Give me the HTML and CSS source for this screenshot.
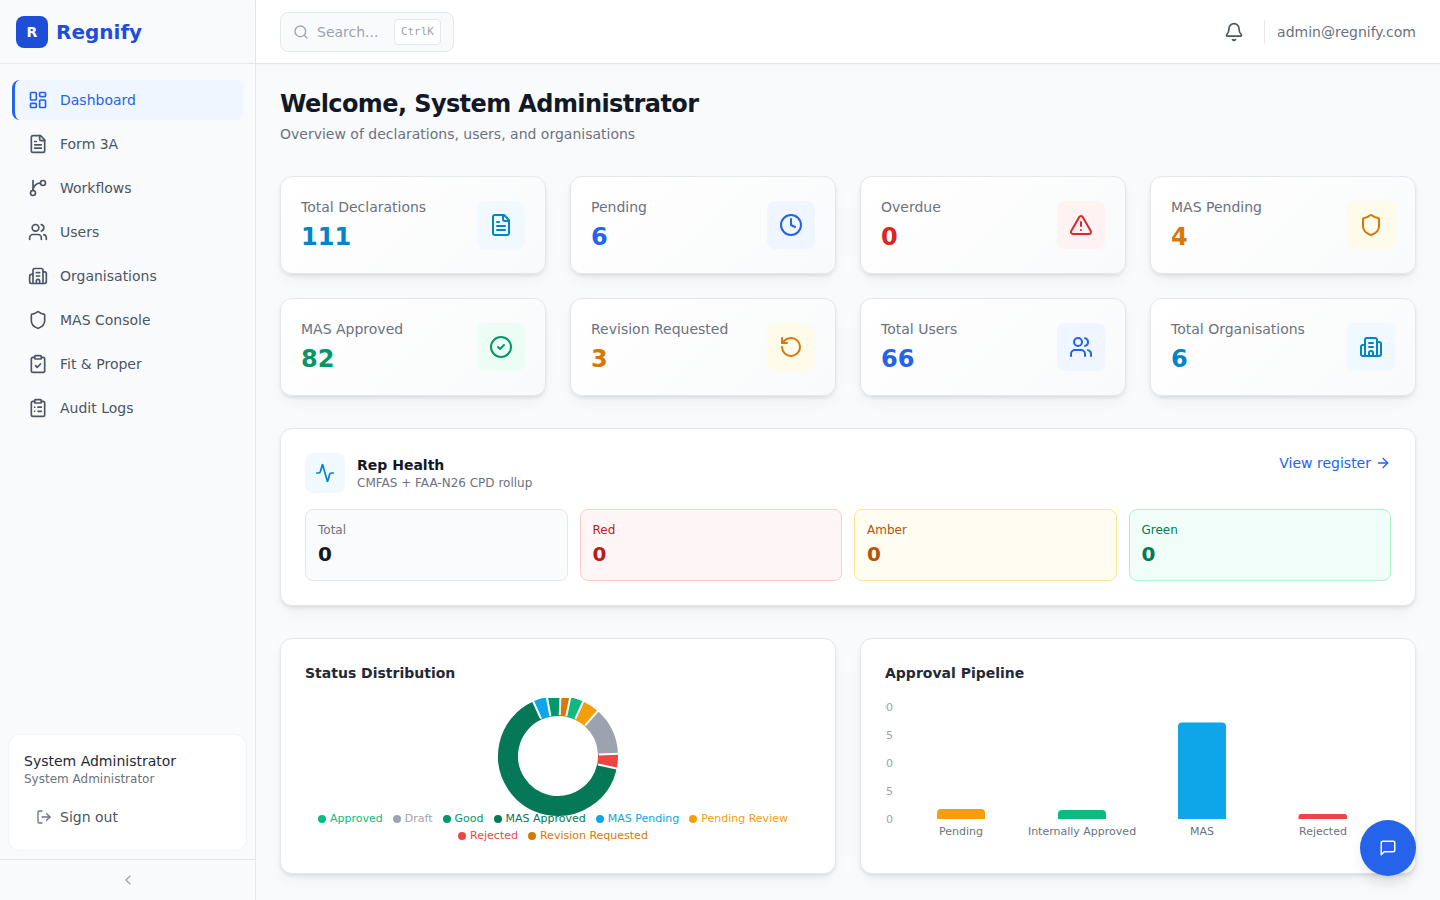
FILE: index.html
```html
<!DOCTYPE html>
<html lang="en">
<head>
	<meta charset="UTF-8">
	<title>Regnify</title>
	<link rel="stylesheet" href="styles.css">
</head>
<body>
	<svg class="sprite" xmlns="http://www.w3.org/2000/svg">
		<symbol id="i-dashboard" viewBox="0 0 24 24"><rect width="7" height="9" x="3" y="3" rx="1"/><rect width="7" height="5" x="14" y="3" rx="1"/><rect width="7" height="9" x="14" y="12" rx="1"/><rect width="7" height="5" x="3" y="16" rx="1"/></symbol>
		<symbol id="i-file" viewBox="0 0 24 24"><path d="M15 2H6a2 2 0 0 0-2 2v16a2 2 0 0 0 2 2h12a2 2 0 0 0 2-2V7Z"/><path d="M14 2v4a2 2 0 0 0 2 2h4"/><path d="M10 9H8"/><path d="M16 13H8"/><path d="M16 17H8"/></symbol>
		<symbol id="i-branch" viewBox="0 0 24 24"><path d="M15 6a9 9 0 0 0-9 9"/><line x1="6" x2="6" y1="3" y2="15"/><circle cx="18" cy="6" r="3"/><circle cx="6" cy="18" r="3"/></symbol>
		<symbol id="i-users" viewBox="0 0 24 24"><path d="M16 21v-2a4 4 0 0 0-4-4H6a4 4 0 0 0-4 4v2"/><circle cx="9" cy="7" r="4"/><path d="M22 21v-2a4 4 0 0 0-3-3.87"/><path d="M16 3.13a4 4 0 0 1 0 7.75"/></symbol>
		<symbol id="i-building" viewBox="0 0 24 24"><path d="M10 12h4"/><path d="M10 8h4"/><path d="M14 21v-3a2 2 0 0 0-4 0v3"/><path d="M6 10H4a2 2 0 0 0-2 2v7a2 2 0 0 0 2 2h16a2 2 0 0 0 2-2V9a2 2 0 0 0-2-2h-2"/><path d="M6 21V5a2 2 0 0 1 2-2h8a2 2 0 0 1 2 2v16"/></symbol>
		<symbol id="i-shield" viewBox="0 0 24 24"><path d="M20 13c0 5-3.5 7.5-7.66 8.95a1 1 0 0 1-.67-.01C7.5 20.5 4 18 4 13V6a1 1 0 0 1 1-1c2 0 4.5-1.2 6.24-2.72a1.17 1.17 0 0 1 1.52 0C14.51 3.81 17 5 19 5a1 1 0 0 1 1 1z"/></symbol>
		<symbol id="i-clipcheck" viewBox="0 0 24 24"><rect width="8" height="4" x="8" y="2" rx="1"/><path d="M16 4h2a2 2 0 0 1 2 2v14a2 2 0 0 1-2 2H6a2 2 0 0 1-2-2V6a2 2 0 0 1 2-2h2"/><path d="m9 14 2 2 4-4"/></symbol>
		<symbol id="i-cliplist" viewBox="0 0 24 24"><rect width="8" height="4" x="8" y="2" rx="1"/><path d="M16 4h2a2 2 0 0 1 2 2v14a2 2 0 0 1-2 2H6a2 2 0 0 1-2-2V6a2 2 0 0 1 2-2h2"/><path d="M12 11h4"/><path d="M12 16h4"/><path d="M8 11h.01"/><path d="M8 16h.01"/></symbol>
		<symbol id="i-logout" viewBox="0 0 24 24"><path d="M9 21H5a2 2 0 0 1-2-2V5a2 2 0 0 1 2-2h4"/><path d="m16 17 5-5-5-5"/><path d="M21 12H9"/></symbol>
		<symbol id="i-chevron" viewBox="0 0 24 24"><path d="m15 18-6-6 6-6"/></symbol>
		<symbol id="i-search" viewBox="0 0 24 24"><path d="m21 21-4.34-4.34"/><circle cx="11" cy="11" r="8"/></symbol>
		<symbol id="i-bell" viewBox="0 0 24 24"><path d="M10.268 21a2 2 0 0 0 3.464 0"/><path d="M3.262 15.326A1 1 0 0 0 4 17h16a1 1 0 0 0 .74-1.673C19.41 13.956 18 12.499 18 8A6 6 0 0 0 6 8c0 4.499-1.411 5.956-2.738 7.326"/></symbol>
		<symbol id="i-clock" viewBox="0 0 24 24"><circle cx="12" cy="12" r="10"/><polyline points="12 6 12 12 16 14"/></symbol>
		<symbol id="i-alert" viewBox="0 0 24 24"><path d="m21.73 18-8-14a2 2 0 0 0-3.48 0l-8 14A2 2 0 0 0 4 21h16a2 2 0 0 0 1.73-3"/><path d="M12 9v4"/><path d="M12 17h.01"/></symbol>
		<symbol id="i-check" viewBox="0 0 24 24"><circle cx="12" cy="12" r="10"/><path d="m9 12 2 2 4-4"/></symbol>
		<symbol id="i-rotate" viewBox="0 0 24 24"><path d="M3 12a9 9 0 1 0 9-9 9.75 9.75 0 0 0-6.74 2.74L3 8"/><path d="M3 3v5h5"/></symbol>
		<symbol id="i-activity" viewBox="0 0 24 24"><path d="M22 12h-2.48a2 2 0 0 0-1.93 1.46l-2.35 8.36a.25.25 0 0 1-.48 0L9.24 2.18a.25.25 0 0 0-.48 0l-2.35 8.36A2 2 0 0 1 4.49 12H2"/></symbol>
		<symbol id="i-arrow" viewBox="0 0 24 24"><path d="M5 12h14"/><path d="m12 5 7 7-7 7"/></symbol>
		<symbol id="i-message" viewBox="0 0 24 24"><path d="M21 15a2 2 0 0 1-2 2H7l-4 4V5a2 2 0 0 1 2-2h14a2 2 0 0 1 2 2z"/></symbol>
	</svg>

	<div class="app">
		<aside class="sidebar">
			<div class="brand">
				<span class="brand-mark">R</span>
				<span class="brand-name">Regnify</span>
			</div>
			<nav class="nav">
				<a class="nav-item active"><svg class="ico"><use href="#i-dashboard"/></svg>Dashboard</a>
				<a class="nav-item"><svg class="ico"><use href="#i-file"/></svg>Form 3A</a>
				<a class="nav-item"><svg class="ico"><use href="#i-branch"/></svg>Workflows</a>
				<a class="nav-item"><svg class="ico"><use href="#i-users"/></svg>Users</a>
				<a class="nav-item"><svg class="ico"><use href="#i-building"/></svg>Organisations</a>
				<a class="nav-item"><svg class="ico"><use href="#i-shield"/></svg>MAS Console</a>
				<a class="nav-item"><svg class="ico"><use href="#i-clipcheck"/></svg>Fit &amp; Proper</a>
				<a class="nav-item"><svg class="ico"><use href="#i-cliplist"/></svg>Audit Logs</a>
			</nav>
			<div class="user-card">
				<div class="user-name">System Administrator</div>
				<div class="user-role">System Administrator</div>
				<a class="sign-out"><svg class="ico-sm"><use href="#i-logout"/></svg>Sign out</a>
			</div>
			<div class="collapse"><svg class="ico-sm"><use href="#i-chevron"/></svg></div>
		</aside>

		<div class="content">
			<header class="topbar">
				<div class="search">
					<svg class="ico-sm"><use href="#i-search"/></svg>
					<span class="search-text">Search...</span>
					<kbd class="kbd">CtrlK</kbd>
				</div>
				<div class="top-right">
					<svg class="ico bell"><use href="#i-bell"/></svg>
					<span class="top-divider"></span>
					<span class="top-email">admin@regnify.com</span>
				</div>
			</header>

			<main class="main">
				<h1 class="title">Welcome, System Administrator</h1>
				<p class="subtitle">Overview of declarations, users, and organisations</p>

				<section class="stats">
					<div class="stat">
						<div><div class="stat-label">Total Declarations</div><div class="stat-value sky">111</div></div>
						<div class="stat-icon sky bg-sky"><svg class="ico-lg"><use href="#i-file"/></svg></div>
					</div>
					<div class="stat">
						<div><div class="stat-label">Pending</div><div class="stat-value blue">6</div></div>
						<div class="stat-icon blue bg-blue"><svg class="ico-lg"><use href="#i-clock"/></svg></div>
					</div>
					<div class="stat">
						<div><div class="stat-label">Overdue</div><div class="stat-value red">0</div></div>
						<div class="stat-icon red bg-red"><svg class="ico-lg"><use href="#i-alert"/></svg></div>
					</div>
					<div class="stat">
						<div><div class="stat-label">MAS Pending</div><div class="stat-value amber">4</div></div>
						<div class="stat-icon amber bg-amber"><svg class="ico-lg"><use href="#i-shield"/></svg></div>
					</div>
					<div class="stat">
						<div><div class="stat-label">MAS Approved</div><div class="stat-value green">82</div></div>
						<div class="stat-icon green bg-green"><svg class="ico-lg"><use href="#i-check"/></svg></div>
					</div>
					<div class="stat">
						<div><div class="stat-label">Revision Requested</div><div class="stat-value amber">3</div></div>
						<div class="stat-icon amber bg-amber"><svg class="ico-lg"><use href="#i-rotate"/></svg></div>
					</div>
					<div class="stat">
						<div><div class="stat-label">Total Users</div><div class="stat-value blue">66</div></div>
						<div class="stat-icon blue bg-blue"><svg class="ico-lg"><use href="#i-users"/></svg></div>
					</div>
					<div class="stat">
						<div><div class="stat-label">Total Organisations</div><div class="stat-value sky">6</div></div>
						<div class="stat-icon sky bg-sky"><svg class="ico-lg"><use href="#i-building"/></svg></div>
					</div>
				</section>

				<section class="panel health">
					<div class="health-head">
						<div class="health-title">
							<div class="health-icon sky bg-sky"><svg class="ico"><use href="#i-activity"/></svg></div>
							<div>
								<div class="health-name">Rep Health</div>
								<div class="health-sub">CMFAS + FAA-N26 CPD rollup</div>
							</div>
						</div>
						<a class="health-link">View register <svg class="ico-sm"><use href="#i-arrow"/></svg></a>
					</div>
					<div class="tiles">
						<div class="tile tile-total"><div class="tile-label">Total</div><div class="tile-value">0</div></div>
						<div class="tile tile-red"><div class="tile-label">Red</div><div class="tile-value">0</div></div>
						<div class="tile tile-amber"><div class="tile-label">Amber</div><div class="tile-value">0</div></div>
						<div class="tile tile-green"><div class="tile-label">Green</div><div class="tile-value">0</div></div>
					</div>
				</section>

				<section class="charts">
					<div class="panel chart-panel">
						<h2 class="chart-title">Status Distribution</h2>
						<div class="chart-area">
							<svg class="chart" viewBox="0 0 506 162">
								<clipPath id="donut-clip"><rect x="0" y="11" width="506" height="151"/></clipPath>
								<g clip-path="url(#donut-clip)">
									<g class="donut">
										<circle cx="253" cy="69" r="50" pathLength="360" stroke="#d97706" stroke-dasharray="9.4 350.6" transform="rotate(-87.6 253 69)"/>
										<circle cx="253" cy="69" r="50" pathLength="360" stroke="#10b981" stroke-dasharray="13.1 346.9" transform="rotate(-78.2 253 69)"/>
										<circle cx="253" cy="69" r="50" pathLength="360" stroke="#f59e0b" stroke-dasharray="16.6 343.4" transform="rotate(-65.1 253 69)"/>
										<circle cx="253" cy="69" r="50" pathLength="360" stroke="#9ca3af" stroke-dasharray="46.5 313.5" transform="rotate(-48.5 253 69)"/>
										<circle cx="253" cy="69" r="50" pathLength="360" stroke="#ef4444" stroke-dasharray="14 346" transform="rotate(-2 253 69)"/>
										<circle cx="253" cy="69" r="50" pathLength="360" stroke="#047857" stroke-dasharray="233.5 126.5" transform="rotate(12 253 69)"/>
										<circle cx="253" cy="69" r="50" pathLength="360" stroke="#0ea5e9" stroke-dasharray="13.8 346.2" transform="rotate(245.5 253 69)"/>
										<circle cx="253" cy="69" r="50" pathLength="360" stroke="#059669" stroke-dasharray="13.1 346.9" transform="rotate(259.3 253 69)"/>
									</g>
									<g class="donut-gaps">
										<line x1="253" y1="28" x2="253" y2="8" transform="rotate(2.4 253 69)"/>
										<line x1="253" y1="28" x2="253" y2="8" transform="rotate(11.8 253 69)"/>
										<line x1="253" y1="28" x2="253" y2="8" transform="rotate(24.9 253 69)"/>
										<line x1="253" y1="28" x2="253" y2="8" transform="rotate(41.5 253 69)"/>
										<line x1="253" y1="28" x2="253" y2="8" transform="rotate(88 253 69)"/>
										<line x1="253" y1="28" x2="253" y2="8" transform="rotate(102 253 69)"/>
										<line x1="253" y1="28" x2="253" y2="8" transform="rotate(335.5 253 69)"/>
										<line x1="253" y1="28" x2="253" y2="8" transform="rotate(349.3 253 69)"/>
									</g>
								</g>
							</svg>
							<div class="legend">
								<span class="legend-item"><i style="background:#10b981"></i><b style="color:#10b981">Approved</b></span>
								<span class="legend-item"><i style="background:#9ca3af"></i><b style="color:#9ca3af">Draft</b></span>
								<span class="legend-item"><i style="background:#059669"></i><b style="color:#059669">Good</b></span>
								<span class="legend-item"><i style="background:#047857"></i><b style="color:#047857">MAS Approved</b></span>
								<span class="legend-item"><i style="background:#0ea5e9"></i><b style="color:#0ea5e9">MAS Pending</b></span>
								<span class="legend-item"><i style="background:#f59e0b"></i><b style="color:#f59e0b">Pending Review</b></span>
								<span class="legend-item"><i style="background:#ef4444"></i><b style="color:#ef4444">Rejected</b></span>
								<span class="legend-item"><i style="background:#d97706"></i><b style="color:#d97706">Revision Requested</b></span>
							</div>
						</div>
					</div>

					<div class="panel chart-panel">
						<h2 class="chart-title">Approval Pipeline</h2>
						<div class="chart-area">
							<svg class="chart" viewBox="0 0 506 162">
								<g class="y-axis">
									<text x="8" y="24">100</text>
									<text x="8" y="52">75</text>
									<text x="8" y="80">50</text>
									<text x="8" y="108">25</text>
									<text x="8" y="136">0</text>
								</g>
								<path fill="#f59e0b" d="M52 132v-6a4 4 0 0 1 4-4h40a4 4 0 0 1 4 4v6z"/>
								<path fill="#10b981" d="M173 132v-5a4 4 0 0 1 4-4h40a4 4 0 0 1 4 4v5z"/>
								<path fill="#0ea5e9" d="M293 132v-92.4a4 4 0 0 1 4-4h40a4 4 0 0 1 4 4v92.4z"/>
								<path fill="#ef4444" d="M413.5 132v-2.5a2.5 2.5 0 0 1 2.5-2.5h43.5a2.5 2.5 0 0 1 2.5 2.5v2.5z"/>
								<g class="x-axis">
									<text x="76" y="148">Pending</text>
									<text x="197" y="148">Internally Approved</text>
									<text x="317" y="148">MAS</text>
									<text x="438" y="148">Rejected</text>
								</g>
							</svg>
						</div>
					</div>
				</section>
			</main>
		</div>
	</div>

	<button class="fab"><svg class="ico"><use href="#i-message"/></svg></button>
</body>
</html>
```

FILE: styles.css
```css
* {
	box-sizing: border-box;
}
html, body {
	margin: 0;
	height: 100%;
	overflow: hidden;
}
body {
	font-family: "DejaVu Sans", sans-serif;
	font-size: 14px;
	color: #111827;
	background: #f9fafb;
}
.sprite {
	display: none;
}
.ico, .ico-sm, .ico-lg {
	flex: none;
	fill: none;
	stroke: currentColor;
	stroke-width: 2;
	stroke-linecap: round;
	stroke-linejoin: round;
}
.ico { width: 20px; height: 20px; }
.ico-sm { width: 16px; height: 16px; }
.ico-lg { width: 24px; height: 24px; }

.app {
	display: flex;
	height: 100vh;
}

/* sidebar */
.sidebar {
	display: flex;
	flex-direction: column;
	flex: none;
	width: 256px;
	background: #f9fafb;
	border-right: 1px solid #e5e7eb;
}
.brand {
	display: flex;
	align-items: center;
	gap: 8px;
	height: 64px;
	padding: 0 16px;
	border-bottom: 1px solid #e5e7eb;
}
.brand-mark {
	display: flex;
	align-items: center;
	justify-content: center;
	width: 32px;
	height: 32px;
	border-radius: 8px;
	background: #1d4ed8;
	color: #fff;
	font-size: 14px;
	font-weight: 700;
}
.brand-name {
	font-size: 20px;
	font-weight: 700;
	color: #1d4ed8;
}
.nav {
	flex: 1;
	display: flex;
	flex-direction: column;
	gap: 4px;
	padding: 16px 12px;
}
.nav-item {
	display: flex;
	align-items: center;
	gap: 12px;
	height: 40px;
	padding-left: 16px;
	border-radius: 8px;
	color: #4b5563;
}
.nav-item.active {
	padding-left: 13px;
	border-left: 3px solid #2563eb;
	background: #eff6ff;
	color: #2563eb;
}
.user-card {
	margin: 0 8px 8px;
	padding: 16px 15px 15px;
	background: #fff;
	border: 1px solid #f3f4f6;
	border-radius: 12px;
}
.user-name {
	line-height: 20px;
	color: #1f2937;
}
.user-role {
	font-size: 12px;
	line-height: 16px;
	color: #6b7280;
}
.sign-out {
	display: flex;
	align-items: center;
	gap: 8px;
	height: 36px;
	margin-top: 12px;
	padding-left: 12px;
	color: #4b5563;
}
.sign-out .ico-sm {
	color: #6b7280;
}
.collapse {
	display: flex;
	align-items: center;
	justify-content: center;
	height: 41px;
	border-top: 1px solid #e5e7eb;
	color: #9ca3af;
}

/* top bar */
.content {
	flex: 1;
	min-width: 0;
}
.topbar {
	display: flex;
	align-items: center;
	justify-content: space-between;
	height: 64px;
	padding: 0 24px;
	background: #fff;
	border-bottom: 1px solid #e5e7eb;
	box-shadow: 0 1px 2px rgba(0, 0, 0, .04);
}
.search {
	display: flex;
	align-items: center;
	width: 174px;
	height: 40px;
	padding: 0 12px;
	background: #f9fafb;
	border: 1px solid #e5e7eb;
	border-radius: 8px;
	color: #9ca3af;
}
.search-text {
	flex: 1;
	margin-left: 8px;
}
.kbd {
	padding: 4px 6px;
	font-family: "DejaVu Sans Mono", monospace;
	font-size: 11px;
	line-height: 16px;
	background: #fff;
	border: 1px solid #e5e7eb;
	border-radius: 4px;
}
.top-right {
	display: flex;
	align-items: center;
}
.bell {
	color: #4b5563;
}
.top-divider {
	width: 1px;
	height: 24px;
	margin: 0 12px 0 20px;
	background: #e5e7eb;
}
.top-email {
	color: #6b7280;
}

/* main */
.main {
	padding: 24px;
}
.title {
	margin: 0;
	font-size: 24px;
	line-height: 32px;
	font-weight: 700;
	letter-spacing: -.6px;
	color: #111827;
}
.subtitle {
	margin: 4px 0 0;
	line-height: 20px;
	color: #6b7280;
}
.stats {
	display: grid;
	grid-template-columns: repeat(4, 1fr);
	gap: 24px;
	margin-top: 32px;
}
.stat {
	display: flex;
	align-items: center;
	justify-content: space-between;
	padding: 20px;
	background: linear-gradient(135deg, #fff, #f9fafb);
	border: 1px solid #e5e7eb;
	border-radius: 12px;
	box-shadow: 0 2px 4px -1px rgba(0, 0, 0, .12), 0 8px 16px -4px rgba(0, 0, 0, .06);
}
.stat-label {
	line-height: 20px;
	color: #6b7280;
}
.stat-value {
	margin-top: 4px;
	font-size: 24px;
	line-height: 32px;
	font-weight: 700;
}
.stat-icon {
	display: flex;
	align-items: center;
	justify-content: center;
	width: 48px;
	height: 48px;
	border-radius: 8px;
}
.sky { color: #0284c7; }
.blue { color: #2563eb; }
.red { color: #dc2626; }
.amber { color: #d97706; }
.green { color: #059669; }
.bg-sky { background: #f0f9ff; }
.bg-blue { background: #eff6ff; }
.bg-red { background: #fef2f2; }
.bg-amber { background: #fffbeb; }
.bg-green { background: #ecfdf5; }

.panel {
	background: #fff;
	border: 1px solid #e5e7eb;
	border-radius: 12px;
	padding: 24px;
	box-shadow: 0 2px 4px -1px rgba(0, 0, 0, .12), 0 8px 16px -4px rgba(0, 0, 0, .06);
}

/* rep health */
.health {
	margin-top: 32px;
}
.health-head {
	display: flex;
	justify-content: space-between;
	align-items: flex-start;
}
.health-title {
	display: flex;
	align-items: center;
	gap: 12px;
}
.health-icon {
	display: flex;
	align-items: center;
	justify-content: center;
	width: 40px;
	height: 40px;
	border-radius: 8px;
}
.health-name {
	font-weight: 700;
	line-height: 20px;
	color: #111827;
}
.health-sub {
	font-size: 12px;
	line-height: 16px;
	color: #6b7280;
}
.health-link {
	display: flex;
	align-items: center;
	gap: 4px;
	line-height: 20px;
	color: #2563eb;
}
.tiles {
	display: grid;
	grid-template-columns: repeat(4, 1fr);
	gap: 12px;
	margin-top: 16px;
}
.tile {
	padding: 12px;
	border: 1px solid;
	border-radius: 8px;
}
.tile-label {
	font-size: 12px;
	line-height: 16px;
}
.tile-value {
	margin-top: 2px;
	font-size: 20px;
	line-height: 28px;
	font-weight: 700;
}
.tile-total { background: #fafbfc; border-color: #e5e7eb; }
.tile-total .tile-label { color: #6b7280; }
.tile-total .tile-value { color: #111827; }
.tile-red { background: #fef6f6; border-color: #fecaca; }
.tile-red .tile-label, .tile-red .tile-value { color: #b91c1c; }
.tile-amber { background: #fffcf2; border-color: #fde68a; }
.tile-amber .tile-label, .tile-amber .tile-value { color: #b45309; }
.tile-green { background: #f1fdf8; border-color: #a7f3d0; }
.tile-green .tile-label, .tile-green .tile-value { color: #047857; }

/* charts */
.charts {
	display: grid;
	grid-template-columns: 1fr 1fr;
	gap: 24px;
	margin-top: 32px;
}
.chart-title {
	margin: 0 0 4px;
	font-size: 14px;
	line-height: 20px;
	font-weight: 700;
	color: #1f2937;
}
.chart-area {
	position: relative;
	height: 162px;
}
.chart {
	display: block;
	width: 100%;
	height: 100%;
	font-size: 11px;
}
.donut circle {
	fill: none;
	stroke-width: 20;
}
.donut-gaps line {
	stroke: #fff;
	stroke-width: 2;
}
.y-axis text {
	fill: #9ca3af;
	text-anchor: end;
}
.x-axis text {
	fill: #6b7280;
	text-anchor: middle;
}
.legend {
	position: absolute;
	left: 0;
	right: 0;
	bottom: 5px;
	display: flex;
	flex-wrap: wrap;
	justify-content: center;
	font-size: 11px;
	line-height: 17px;
}
.legend-item {
	display: flex;
	align-items: center;
	gap: 4px;
	margin-right: 10px;
}
.legend-item i {
	width: 8px;
	height: 8px;
	border-radius: 50%;
}
.legend-item b {
	font-weight: 400;
}

.fab {
	position: fixed;
	right: 24px;
	bottom: 24px;
	display: flex;
	align-items: center;
	justify-content: center;
	width: 56px;
	height: 56px;
	padding: 0;
	border: none;
	border-radius: 50%;
	background: #2563eb;
	color: #fff;
	box-shadow: 0 10px 15px -3px rgba(0, 0, 0, .1), 0 4px 6px -4px rgba(0, 0, 0, .1);
}
.fab .ico {
	width: 18px;
	height: 18px;
}
```
